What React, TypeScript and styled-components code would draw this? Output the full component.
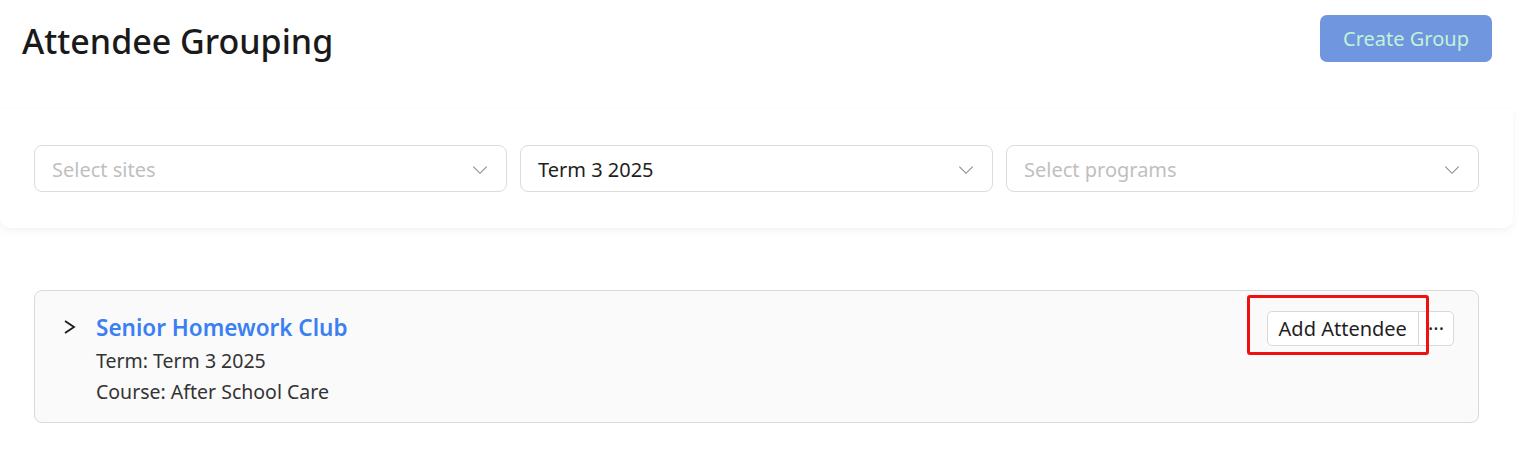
import React from "react";
import styled, { createGlobalStyle } from "styled-components";

const Global = createGlobalStyle`
  html, body { margin: 0; padding: 0; background: #ffffff; }
  body { font-family: "Noto Sans", "Open Sans", sans-serif; color: #1f1f1f; }
  * { box-sizing: border-box; }
`;

const Page = styled.div`
  width: 1520px;
  height: 451px;
  overflow: hidden;
  background: #ffffff;
`;

const Header = styled.header`
  display: flex;
  justify-content: space-between;
  align-items: flex-start;
  padding: 15px 28px 0 22px;
  height: 109px;
`;

const Title = styled.h1`
  margin: 0;
  padding-top: 3px;
  font-size: 34px;
  line-height: 46px;
  font-weight: 500;
  color: #1a1a1a;
`;

const PrimaryButton = styled.button`
  width: 172px;
  height: 47px;
  border: none;
  border-radius: 7px;
  background: #7096e0;
  color: #c2f3d6;
  font-family: inherit;
  font-size: 20px;
  cursor: pointer;
`;

const FilterCard = styled.section`
  margin-right: 7px;
  padding: 36px 34px 36px 34px;
  background: #ffffff;
  border-radius: 0 0 10px 10px;
  box-shadow: 0 3px 8px rgba(0, 0, 0, 0.05);
  display: grid;
  grid-template-columns: repeat(3, 1fr);
  gap: 13px;
`;

const SelectBox = styled.div`
  height: 47px;
  border: 1px solid #dcdcdc;
  border-radius: 8px;
  display: flex;
  align-items: center;
  justify-content: space-between;
  padding: 2px 16px 0 17px;
  background: #fff;
`;

const SelectText = styled.span<{ $placeholder?: boolean }>`
  font-size: 20px;
  color: ${(p) => (p.$placeholder ? "#bfbfbf" : "#1f1f1f")};
`;

const GroupList = styled.div`
  padding: 62px 41px 0 34px;
`;

const GroupCard = styled.div`
  position: relative;
  height: 133px;
  border: 1px solid #d9d9d9;
  border-radius: 8px;
  background: #fafafa;
  display: flex;
  justify-content: space-between;
  padding: 20px 24px 0 28px;
`;

const GroupMain = styled.div`
  display: flex;
  gap: 19px;
`;

const Toggle = styled.span`
  margin-top: 8px;
  display: flex;
`;

const GroupInfo = styled.div`
  display: flex;
  flex-direction: column;
`;

const GroupName = styled.a`
  font-size: 22.5px;
  font-weight: 600;
  color: #3a80f2;
  line-height: 34px;
  text-decoration: none;
`;

const Meta = styled.div`
  font-size: 19.5px;
  color: #333;
  line-height: 31px;
`;

const Actions = styled.div`
  display: flex;
  align-items: flex-start;
  height: 35px;
`;

const ActionButton = styled.button<{ $side: "left" | "right" }>`
  height: 35px;
  padding: ${(p) => (p.$side === "left" ? "0 11px" : "0 9px")};
  background: #fff;
  border: 1px solid #d9d9d9;
  border-radius: ${(p) => (p.$side === "left" ? "5px 0 0 5px" : "0 5px 5px 0")};
  margin-left: ${(p) => (p.$side === "right" ? "-1px" : "0")};
  font-family: inherit;
  font-size: 20px;
  color: #1f1f1f;
  display: flex;
  align-items: center;
`;

const Highlight = styled.div`
  position: absolute;
  left: 1212px;
  top: 4px;
  width: 182px;
  height: 60px;
  border: 3px solid #f01010;
  border-radius: 3px;
  pointer-events: none;
`;

const Chevron = () => (
  <svg width="20" height="20" viewBox="0 0 24 24" fill="none" stroke="#8c8c8c" strokeWidth="1.3">
    <path d="M4 8l8 8 8-8" />
  </svg>
);

const Right = () => (
  <svg width="14" height="16" viewBox="0 0 14 16" fill="none" stroke="#1a1a1a" strokeWidth="1.8">
    <path d="M2 2l9 6-9 6" />
  </svg>
);

export default function App() {
  return (
    <Page>
      <Global />
      <Header>
        <Title>Attendee Grouping</Title>
        <PrimaryButton>Create Group</PrimaryButton>
      </Header>
      <FilterCard>
        <SelectBox>
          <SelectText $placeholder>Select sites</SelectText>
          <Chevron />
        </SelectBox>
        <SelectBox>
          <SelectText>Term 3 2025</SelectText>
          <Chevron />
        </SelectBox>
        <SelectBox>
          <SelectText $placeholder>Select programs</SelectText>
          <Chevron />
        </SelectBox>
      </FilterCard>
      <GroupList>
        <GroupCard>
          <GroupMain>
            <Toggle>
              <Right />
            </Toggle>
            <GroupInfo>
              <GroupName href="#">Senior Homework Club</GroupName>
              <Meta>Term: Term 3 2025</Meta>
              <Meta>Course: After School Care</Meta>
            </GroupInfo>
          </GroupMain>
          <Actions>
            <ActionButton $side="left">Add Attendee</ActionButton>
            <ActionButton $side="right">···</ActionButton>
          </Actions>
          <Highlight />
        </GroupCard>
      </GroupList>
    </Page>
  );
}
